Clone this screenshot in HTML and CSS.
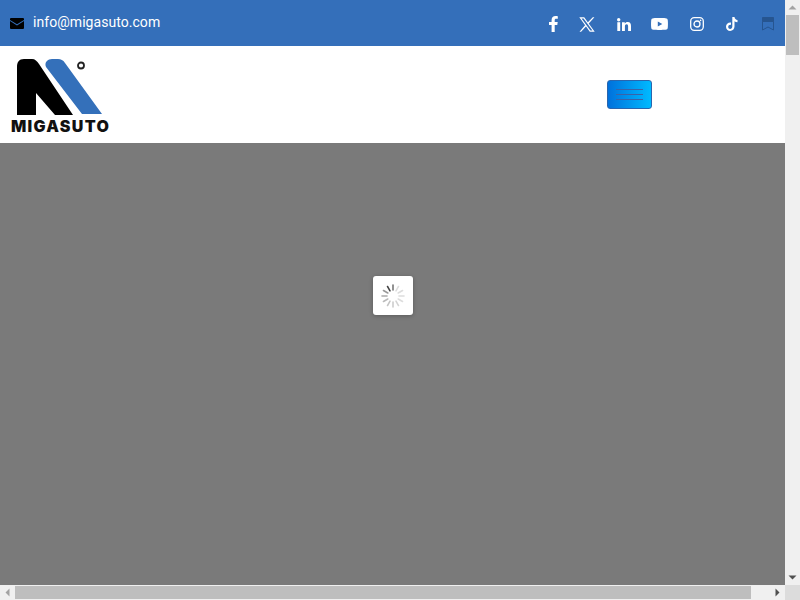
FILE: index.html
```html
<!DOCTYPE html>
<html lang="en">
<head>
<meta charset="utf-8">
<title>Migasuto</title>
<link rel="stylesheet" href="styles.css">
</head>
<body>
<div class="window">
  <div class="page">
    <div class="topbar">
      <a class="mail">
        <svg class="mail-icon" width="14" height="11" viewBox="0 0 14 11"><path d="M1 0h12a1 1 0 0 1 1 1v.9L7 6.300 0 1.900V1a1 1 0 0 1 1-1z" fill="#000"/><path d="M0 3l7 4.400L14 3v7a1 1 0 0 1-1 1H1a1 1 0 0 1-1-1z" fill="#000"/></svg>
        <span>info@migasuto.com</span>
      </a>
      <div class="socials">
        <svg class="s-fb" width="9" height="16" viewBox="0 0 9 16"><path d="M2.600 16V9H0V6h2.600V4C2.600 1.400 4.100 0 6.500 0c1.100 0 2.100.1 2.300.2v2.600H7.200C6 2.800 5.700 3.400 5.700 4.300V6h3l-.4 3H5.700v7z" fill="#fff"/></svg>
        <svg class="s-x" width="16" height="15" viewBox="0 0 16 15"><path d="M.3.300h4.900l10.500 14.400h-4.900zM2.500 1.400l8.900 12.200h2.100L4.600 1.400z" fill="#fff" fill-rule="evenodd"/><path d="M13.800.3h1.600L9.300 6.900l-.9-1.200zM6.500 7.800l.9 1.200-5.300 5.700H.5z" fill="#fff"/></svg>
        <svg class="s-in" width="14" height="13" viewBox="0 0 14 13"><rect x=".3" y="4.200" width="2.900" height="8.800" fill="#fff"/><circle cx="1.700" cy="1.700" r="1.700" fill="#fff"/><path d="M5 4.200h2.800v1.200c.5-.8 1.500-1.500 2.900-1.500 2.700 0 3.300 1.800 3.300 4.200V13h-2.900V8.600c0-1.100-.1-2.300-1.500-2.300S7.900 7.400 7.900 8.500V13H5z" fill="#fff"/></svg>
        <svg class="s-yt" width="17" height="12" viewBox="0 0 17 12"><path fill-rule="evenodd" d="M2.500.2C5.500 0 11.500 0 14.500.2 16 .3 16.700 1 16.800 2.500c.2 2 .2 5 0 7-.1 1.500-.8 2.200-2.300 2.300-3 .2-9 .2-12 0C1 11.700.3 11 .2 9.500c-.2-2-.2-5 0-7C.3 1 1 .3 2.500.2zM6.800 3.400v5.200L11.300 6z" fill="#fff"/></svg>
        <svg class="s-ig" width="14" height="14" viewBox="0 0 14 14" fill="none" stroke="#fff"><rect x=".7" y=".7" width="12.600" height="12.600" rx="3.500" stroke-width="1.300"/><circle cx="7" cy="7" r="3" stroke-width="1.300"/><circle cx="10.600" cy="3.400" r=".8" fill="#fff" stroke="none"/></svg>
        <svg class="s-tt" width="12" height="14" viewBox="0 0 12 14"><path d="M6.300 0h2.200c.2 1.700 1.300 2.900 3 3.100v2.200c-1.100 0-2.100-.4-3-1v5.300c0 2.700-2 4.400-4.300 4.400C1.900 14 0 12.200 0 9.800c0-2.700 2.300-4.600 5-4.200v2.300c-1.500-.3-2.800.6-2.800 2 0 1.100.9 2 2 2 1.200 0 2.100-.9 2.100-2.300z" fill="#fff"/></svg>
        <svg class="s-bm" width="12" height="14" viewBox="0 0 12 14" fill="none"><path d="M.5 4.500V.5h11v4z" fill="#265590" stroke="#265590"/><path d="M.5 4.500v8.500l5.500-3 5.500 3V4.500" stroke="#265590"/></svg>
      </div>
    </div>

    <header class="navbar">
      <div class="logo">
        <svg class="logo-mark" width="97" height="58" viewBox="0 0 97 58">
          <path d="M6 57V9C6 4 8 1 13 1H21C24 1 26 3 28 6L62 57H44L25 35V57Z" fill="#000"/>
          <path d="M35 9C33 4 37 1 41 1H47C50 1 52 2 54 5L91 56H71Z" fill="#3470ba"/>
          <circle cx="70" cy="7.500" r="3" fill="none" stroke="#222" stroke-width="1.800"/>
        </svg>
        <div class="logo-text">MIGASUTO</div>
      </div>
      <button class="toggler" type="button" aria-label="Menu">
        <span class="bar"></span><span class="bar"></span><span class="bar"></span>
      </button>
    </header>

    <div class="overlay">
      <div class="loader">
        <svg width="26" height="26" viewBox="-13 -13 26 26" stroke-width="1.600" stroke-linecap="round">
          <line x1="0" y1="-6" x2="0" y2="-11" stroke="#777" transform="rotate(0)"/>
          <line x1="0" y1="-6" x2="0" y2="-11" stroke="#ddd" transform="rotate(30)"/>
          <line x1="0" y1="-6" x2="0" y2="-11" stroke="#ddd" transform="rotate(60)"/>
          <line x1="0" y1="-6" x2="0" y2="-11" stroke="#ddd" transform="rotate(90)"/>
          <line x1="0" y1="-6" x2="0" y2="-11" stroke="#ddd" transform="rotate(120)"/>
          <line x1="0" y1="-6" x2="0" y2="-11" stroke="#d4d4d4" transform="rotate(150)"/>
          <line x1="0" y1="-6" x2="0" y2="-11" stroke="#ccc" transform="rotate(180)"/>
          <line x1="0" y1="-6" x2="0" y2="-11" stroke="#c4c4c4" transform="rotate(210)"/>
          <line x1="0" y1="-6" x2="0" y2="-11" stroke="#bbb" transform="rotate(240)"/>
          <line x1="0" y1="-6" x2="0" y2="-11" stroke="#aaa" transform="rotate(270)"/>
          <line x1="0" y1="-6" x2="0" y2="-11" stroke="#999" transform="rotate(300)"/>
          <line x1="0" y1="-6" x2="0" y2="-11" stroke="#444" transform="rotate(330)"/>
        </svg>
      </div>
    </div>
  </div>

  <div class="vscroll">
    <svg class="arrow" width="15" height="15" viewBox="0 0 15 15"><path d="M3.500 9.500h8l-4-4z" fill="#a3a3a3"/></svg>
    <div class="vtrack"><div class="vthumb"></div></div>
    <svg class="arrow" width="15" height="15" viewBox="0 0 15 15"><path d="M3.500 5.500h8l-4 4z" fill="#505050"/></svg>
  </div>

  <div class="hscroll">
    <svg class="arrow" width="15" height="15" viewBox="0 0 15 15"><path d="M9.500 3.500v8l-4-4z" fill="#a3a3a3"/></svg>
    <div class="htrack"><div class="hthumb"></div></div>
    <svg class="arrow" width="15" height="15" viewBox="0 0 15 15"><path d="M5.500 3.500v8l4-4z" fill="#505050"/></svg>
  </div>
  <div class="corner"></div>
</div>
</body>
</html>
```
FILE: styles.css
```css
* { box-sizing: border-box; }
html, body { margin: 0; height: 100%; overflow: hidden; }
body { font-family: "Roboto", "Liberation Sans", sans-serif; background: #fff; }

.window {
  display: grid;
  grid-template-columns: 785px 15px;
  grid-template-rows: 585px 15px;
  width: 800px;
  height: 600px;
}

.page { display: flex; flex-direction: column; overflow: hidden; }

.topbar {
  height: 46px;
  flex: none;
  background: #346fba;
  display: flex;
  align-items: center;
  justify-content: space-between;
  padding: 0 11px 0 10px;
}
.mail { display: flex; align-items: center; gap: 9px; color: #fff; font-size: 14px; letter-spacing: .05px; line-height: 20px; margin-top: -2px; }
.mail-icon { flex: none; margin-top: 2px; }

.socials { display: flex; align-items: center; height: 46px; padding-top: 2px; }
.socials svg { display: block; flex: none; }
.s-x { margin-left: 21px; }
.s-in { margin-left: 22px; }
.s-yt { margin-left: 20px; }
.s-ig { margin-left: 22px; }
.s-tt { margin-left: 22px; }
.s-bm { margin-left: 24px; }

.navbar {
  height: 97px;
  flex: none;
  background: #fff;
  display: flex;
  align-items: flex-start;
  padding-left: 11px;
}
.logo { width: 99px; padding-top: 12px; }
.logo-mark { display: block; }
.logo-text {
  font-family: "Inter", "Liberation Sans", sans-serif;
  font-weight: 900;
  font-size: 16px;
  line-height: 16px;
  letter-spacing: 1.3px;
  color: #111;
  white-space: nowrap;
  margin-top: 2px;
}
.toggler {
  width: 45px;
  height: 29px;
  margin: 34px 0 0 497px;
  padding: 0;
  border: 1px solid #2a65ad;
  border-radius: 3px;
  background: linear-gradient(90deg, #0071dc, #00baff);
  display: flex;
  flex-direction: column;
  align-items: center;
  justify-content: center;
  gap: 4px;
}
.bar { display: block; width: 27px; height: 1px; background: #3a63a8; }

.overlay {
  flex: 1;
  background: #7a7a7a;
  display: flex;
  align-items: flex-start;
  justify-content: center;
  padding: 133px 0 0 1px;
}
.loader {
  width: 40px;
  height: 39px;
  background: #fff;
  border-radius: 3px;
  box-shadow: 0 1px 4px rgba(0, 0, 0, .25);
  display: flex;
  align-items: center;
  justify-content: center;
}

.vscroll, .hscroll { background: #f0f0f0; display: flex; }
.vscroll { flex-direction: column; }
.arrow { display: block; flex: none; }
.vtrack { flex: 1; padding: 0 1px; }
.vthumb { height: 40px; background: #bebebe; }
.htrack { flex: 1; padding: 1px 0; }
.hthumb { width: 736px; height: 13px; background: #bebebe; }
.corner { background: #dcdcdc; }
```
